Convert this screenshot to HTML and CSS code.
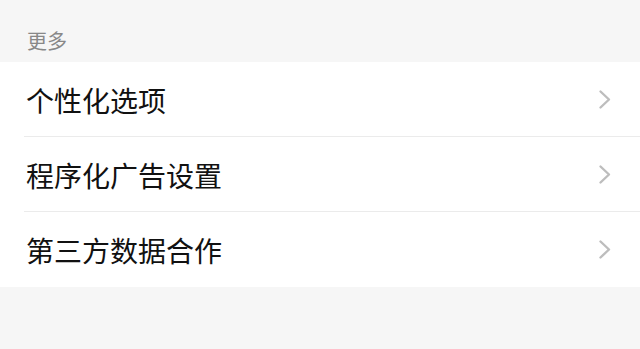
FILE: index.html
```html
<!DOCTYPE html>
<html lang="zh">
<head>
<meta charset="utf-8">
<link rel="stylesheet" href="styles.css">
</head>
<body>
<div class="page">
  <div class="section-title">更多</div>
  <ul class="list">
    <li class="row"><div class="row-inner"><span class="label">个性化选项</span><svg class="chev" width="14" height="22" viewBox="0 0 14 22"><path d="M2.5 2.5 L11 10.5 L2.5 18.5" fill="none" stroke="#bdbdbd" stroke-width="2.4" stroke-linecap="round" stroke-linejoin="round"/></svg></div></li>
    <li class="row"><div class="row-inner"><span class="label">程序化广告设置</span><svg class="chev" width="14" height="22" viewBox="0 0 14 22"><path d="M2.5 2.5 L11 10.5 L2.5 18.5" fill="none" stroke="#bdbdbd" stroke-width="2.4" stroke-linecap="round" stroke-linejoin="round"/></svg></div></li>
    <li class="row"><div class="row-inner"><span class="label">第三方数据合作</span><svg class="chev" width="14" height="22" viewBox="0 0 14 22"><path d="M2.5 2.5 L11 10.5 L2.5 18.5" fill="none" stroke="#bdbdbd" stroke-width="2.4" stroke-linecap="round" stroke-linejoin="round"/></svg></div></li>
  </ul>
</div>
</body>
</html>
```
FILE: styles.css
```css
html, body {
  margin: 0;
  padding: 0;
  background: #f6f6f6;
  font-family: "Noto Sans CJK SC", "Noto Sans", sans-serif;
}
.page {
  width: 640px;
  height: 349px;
  background: #f6f6f6;
}
.section-title {
  height: 62px;
  box-sizing: border-box;
  display: flex;
  align-items: flex-end;
  padding: 0 0 11px 27px;
  font-size: 20px;
  line-height: 20px;
  color: #888888;
}
.list {
  list-style: none;
  margin: 0;
  padding: 0;
  background: #ffffff;
}
.row {
  padding-left: 24px;
  background: #ffffff;
}
.row-inner {
  height: 75px;
  box-sizing: border-box;
  display: flex;
  align-items: center;
  justify-content: space-between;
  padding: 1px 28px 0 2px;
  border-bottom: 1px solid #ebebeb;
}
.row:last-child .row-inner {
  border-bottom: none;
}
.label {
  font-size: 28px;
  line-height: 30px;
  color: #111111;
}
.chev {
  display: block;
}
```
